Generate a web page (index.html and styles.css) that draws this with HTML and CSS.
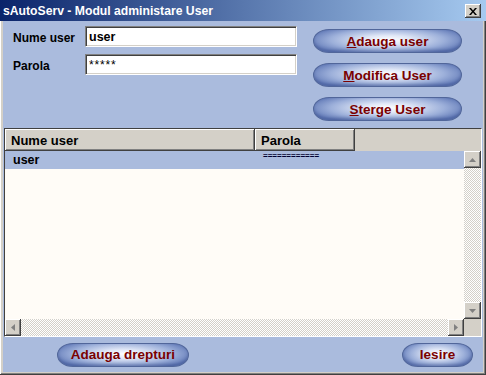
FILE: index.html
```html
<!DOCTYPE html>
<html lang="ro">
  <head>
    <meta charset="UTF-8" />
    <title>sAutoServ - Modul administare User</title>
    <link rel="stylesheet" href="styles.css">
  </head>
  <body>
    <div class="window">
      <div class="titlebar">
        <span class="title">sAutoServ - Modul administare User</span>
        <button class="close" aria-label="Close">
          <svg width="8" height="7" viewBox="0 0 8 7"><path d="M0 0h2l2 2.5L6 0h2L5 3.5 8 7H6L4 4.5 2 7H0l3-3.5z" fill="#000"/></svg>
        </button>
      </div>

      <div class="panel">
        <div class="top">
          <div class="form">
            <label class="row"><span class="lbl">Nume user</span><input type="text" value="user" /></label>
            <label class="row"><span class="lbl">Parola</span><input type="text" class="pwd" value="*****" /></label>
          </div>
          <div class="actions">
            <button class="pill"><u>A</u>dauga user</button>
            <button class="pill"><u>M</u>odifica User</button>
            <button class="pill"><u>S</u>terge User</button>
          </div>
        </div>

        <div class="grid">
          <div class="head">
            <div class="hcell name">Nume user</div>
            <div class="hcell pass">Parola</div>
            <div class="hfill"></div>
          </div>
          <div class="body">
            <div class="datarow">
              <div class="cell name">user</div>
              <div class="cell pass"><span class="mask">============</span></div>
            </div>
          </div>
          <div class="vscroll">
            <div class="sbtn">
              <svg width="7" height="4" viewBox="0 0 7 4"><path d="M3.5 0L7 4H0z" fill="#808080"/></svg>
            </div>
            <div class="track"></div>
            <div class="sbtn">
              <svg width="7" height="4" viewBox="0 0 7 4"><path d="M0 0h7L3.5 4z" fill="#808080"/></svg>
            </div>
          </div>
          <div class="hscroll">
            <div class="sbtn">
              <svg width="4" height="7" viewBox="0 0 4 7"><path d="M4 0v7L0 3.5z" fill="#808080"/></svg>
            </div>
            <div class="track"></div>
            <div class="sbtn">
              <svg width="4" height="7" viewBox="0 0 4 7"><path d="M0 0l4 3.5L0 7z" fill="#808080"/></svg>
            </div>
          </div>
          <div class="corner"></div>
        </div>

        <div class="bottom">
          <button class="pill wide">Adauga drepturi</button>
          <button class="pill small">Iesire</button>
        </div>
      </div>
    </div>
  </body>
</html>
```

FILE: styles.css
```css
:root {
  font-family: "Liberation Sans", Arial, sans-serif;
  --panel: #aabbdd;
  --face: #d4d0c8;
  --btn-text: #7a0000;
}
* {
  box-sizing: border-box;
}
body {
  margin: 0;
  width: 486px;
  height: 375px;
  overflow: hidden;
}
.window {
  width: 486px;
  height: 375px;
  display: flex;
  flex-direction: column;
  background: var(--face);
  padding: 0 3px 3px 3px;
  box-shadow: inset -1px -1px #404040, inset 1px 1px #fff, inset -2px -2px #808080;
}
.titlebar {
  height: 21px;
  margin: 0 -3px;
  padding: 1px 4px 0 3px;
  display: flex;
  align-items: center;
  justify-content: space-between;
  background: linear-gradient(to right, #0a246a, #a6caf0);
}
.title {
  color: #fff;
  font-weight: bold;
  font-size: 12.2px;
}
.close {
  width: 16px;
  height: 14px;
  padding: 0;
  margin-right: 1px;
  border: none;
  background: var(--face);
  display: flex;
  align-items: center;
  justify-content: center;
  box-shadow: inset -1px -1px #404040, inset 1px 1px #fff, inset -2px -2px #808080;
}
.panel {
  flex: 1;
  display: flex;
  flex-direction: column;
  background: var(--panel);
}
.top {
  height: 107px;
  display: flex;
  padding: 5px 0 0 10px;
  gap: 16px;
}
.form {
  display: flex;
  flex-direction: column;
  gap: 7px;
}
.row {
  display: flex;
  align-items: center;
  font-weight: bold;
  font-size: 12px;
}
.lbl {
  width: 72px;
  padding-top: 3px;
}
.row input {
  width: 212px;
  height: 21px;
  padding: 0 3px;
  font: bold 12.5px "Liberation Sans", Arial, sans-serif;
  color: #000;
  background: #fff;
  border: 1px solid;
  border-color: #808080 #fff #fff #808080;
  box-shadow: inset 1px 1px #404040, inset -1px -1px var(--face);
  outline: none;
}
.row input.pwd {
  font: 12px "Liberation Sans", Arial, sans-serif;
  letter-spacing: 0.8px;
}
.actions {
  display: flex;
  flex-direction: column;
  gap: 10px;
  padding-top: 3px;
}
.pill {
  height: 24px;
  padding: 0;
  border: 1px solid #51669a;
  border-radius: 16px / 12px;
  background:
    radial-gradient(ellipse 55% 70% at 50% 45%, #ffffff 0%, #dfe6f6 30%, #9db0da 70%, #637bb8 100%);
  color: var(--btn-text);
  font: bold 13.5px "Liberation Sans", Arial, sans-serif;
  box-shadow: inset 0 -2px 3px rgba(40, 60, 120, 0.35);
  cursor: pointer;
}
.actions .pill {
  width: 149px;
}
.grid {
  height: 209px;
  margin: 0 1px;
  display: grid;
  grid-template-columns: 1fr 17px;
  grid-template-rows: 22px 1fr 17px;
  border: 1px solid;
  border-color: #404040 #fff #fff #404040;
  background: #fffcf7;
}
.head {
  grid-column: 1 / 3;
  display: flex;
  background: var(--face);
  font-weight: bold;
  font-size: 13px;
}
.hcell {
  display: flex;
  align-items: center;
  padding-left: 6px;
  box-shadow: inset -1px -1px #404040, inset 1px 1px #fff, inset -2px -2px #808080;
}
.hcell.name {
  width: 250px;
}
.hcell.pass {
  width: 100px;
}
.hfill {
  flex: 1;
}
.body {
  overflow: hidden;
}
.datarow {
  height: 18px;
  display: flex;
  background: var(--panel);
  font-weight: bold;
  font-size: 12.5px;
}
.cell {
  display: flex;
  align-items: center;
}
.cell.name {
  width: 250px;
  padding-left: 8px;
}
.cell.pass {
  align-items: flex-start;
  padding: 1px 0 0 8px;
}
.mask {
  font-size: 8px;
  font-weight: bold;
  color: #000030;
  line-height: 8px;
}
.vscroll,
.hscroll {
  display: flex;
  background: repeating-conic-gradient(var(--face) 0 25%, #fff 0 50%) 0 0 / 2px 2px;
}
.vscroll {
  flex-direction: column;
}
.track {
  flex: 1;
}
.sbtn {
  width: 17px;
  height: 17px;
  flex: none;
  display: flex;
  align-items: center;
  justify-content: center;
  background: var(--face);
  box-shadow: inset -1px -1px #404040, inset 1px 1px #fff, inset -2px -2px #808080;
}
.hscroll .sbtn {
  width: 16px;
}
.corner {
  background: var(--face);
}
.bottom {
  flex: 1;
  display: flex;
  align-items: center;
  justify-content: space-between;
  padding: 0 10px 0 54px;
}
.pill.wide {
  width: 132px;
}
.pill.small {
  width: 71px;
}
```
